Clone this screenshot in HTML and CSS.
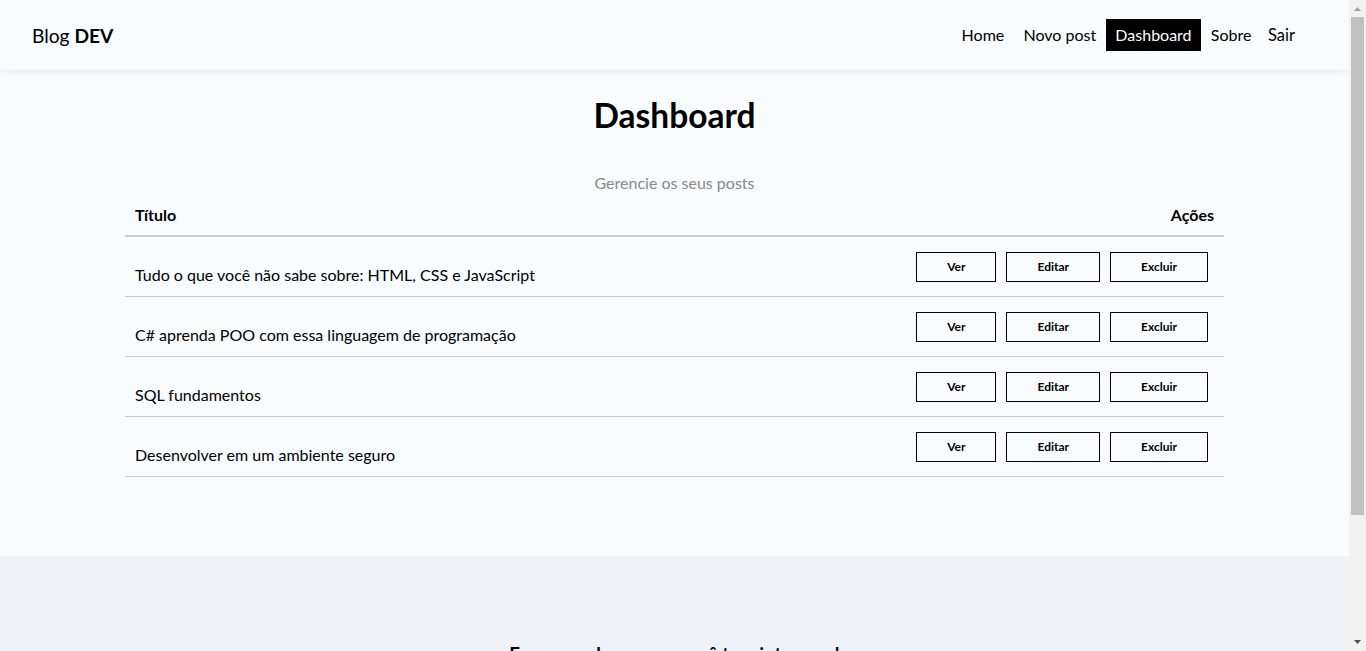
FILE: index.html
```html
<!DOCTYPE html>
<html lang="pt-BR">
<head>
<meta charset="utf-8">
<title>Blog DEV</title>
<link rel="stylesheet" href="styles.css">
</head>
<body>
<nav class="navbar">
  <a class="brand" href="#">Blog <span>DEV</span></a>
  <ul class="links">
    <li><a href="#">Home</a></li>
    <li><a href="#">Novo post</a></li>
    <li><a class="active" href="#">Dashboard</a></li>
    <li><a href="#">Sobre</a></li>
    <li><button class="logout">Sair</button></li>
  </ul>
</nav>
<main class="dashboard">
  <h1>Dashboard</h1>
  <p class="subtitle">Gerencie os seus posts</p>
  <div class="table">
    <div class="thead">
      <span>Título</span>
      <span>Ações</span>
    </div>
    <div class="row">
      <p class="title">Tudo o que você não sabe sobre: HTML, CSS e JavaScript</p>
      <div class="actions">
        <a class="btn" href="#">Ver</a>
        <a class="btn" href="#">Editar</a>
        <button class="btn">Excluir</button>
      </div>
    </div>
    <div class="row">
      <p class="title">C# aprenda POO com essa linguagem de programação</p>
      <div class="actions">
        <a class="btn" href="#">Ver</a>
        <a class="btn" href="#">Editar</a>
        <button class="btn">Excluir</button>
      </div>
    </div>
    <div class="row">
      <p class="title">SQL fundamentos</p>
      <div class="actions">
        <a class="btn" href="#">Ver</a>
        <a class="btn" href="#">Editar</a>
        <button class="btn">Excluir</button>
      </div>
    </div>
    <div class="row">
      <p class="title">Desenvolver em um ambiente seguro</p>
      <div class="actions">
        <a class="btn" href="#">Ver</a>
        <a class="btn" href="#">Editar</a>
        <button class="btn">Excluir</button>
      </div>
    </div>
  </div>
</main>
<footer class="footer">
  <h3>Escreva sobre o que você tem interesse!</h3>
  <p>Blog DEV &copy; 2022</p>
</footer>
<div class="scrollbar" aria-hidden="true">
  <div class="sb-btn">
    <svg width="17" height="17" viewBox="0 0 17 17"><path d="M5 11 L8.5 7 L12 11 Z" fill="#a3a3a3"/></svg>
  </div>
  <div class="sb-track"><div class="sb-thumb"></div></div>
  <div class="sb-btn">
    <svg width="17" height="17" viewBox="0 0 17 17"><path d="M5 6 L8.5 10 L12 6 Z" fill="#505050"/></svg>
  </div>
</div>
</body>
</html>
```
FILE: styles.css
```css
* {
  box-sizing: border-box;
}

html {
  scrollbar-width: none;
}

body {
  margin: 0 17px 0 0;
  background: #f8fcff;
  color: #000;
  font-family: Lato, "Noto Sans", sans-serif;
  font-size: 16px;
}

a {
  color: #000;
  text-decoration: none;
}

.navbar {
  height: 70px;
  display: flex;
  align-items: center;
  justify-content: space-between;
  padding: 0 47px 0 32px;
  background: #f8fcff;
  box-shadow: 0 -2px 10px rgba(0, 0, 0, 0.15);
  position: relative;
}

.brand {
  font-size: 19.2px;
  margin-top: 1px;
}

.brand span {
  font-weight: 700;
}

.links {
  display: flex;
  align-items: center;
  list-style: none;
  margin: 0;
  padding: 0;
}

.links a {
  display: block;
  padding: 0.4em 0.6em;
  line-height: 20px;
}

.links a.active {
  background: #000;
  color: #fff;
}

.logout {
  background: transparent;
  border: none;
  font-family: inherit;
  font-size: 16.5px;
  padding: 0 7px 1px;
  cursor: pointer;
  color: #000;
}

.dashboard {
  min-height: 486px;
  padding-top: 25px;
}

.dashboard h1 {
  margin: 0;
  text-align: center;
  font-size: 33.5px;
  line-height: 40px;
  font-weight: 700;
}

.subtitle {
  margin: 38px 0 0;
  text-align: center;
  color: #888;
  line-height: 20px;
}

.table {
  width: 1099px;
  margin: 0 auto;
}

.thead {
  display: flex;
  justify-content: space-between;
  padding: 11px 10px 9px;
  font-weight: 700;
  line-height: 22px;
  border-bottom: 2px solid #ccc;
}

.row {
  display: flex;
  align-items: center;
  justify-content: space-between;
  height: 60px;
  padding: 0 16px 0 10px;
  border-bottom: 1px solid #ccc;
}

.title {
  margin: 16px 0 0;
  line-height: 20px;
}

.actions {
  display: flex;
  gap: 10px;
}

.btn {
  display: block;
  height: 30px;
  padding: 0 30px;
  border: 1px solid #000;
  background: transparent;
  font-family: inherit;
  font-size: 12px;
  font-weight: 700;
  line-height: 28px;
  color: #000;
  cursor: pointer;
}

.footer {
  height: 251px;
  background: #eef2f6;
  padding-top: 86px;
  text-align: center;
}

.footer h3 {
  margin: 0;
  font-size: 18.72px;
  line-height: 24px;
}

.footer p {
  margin: 16px 0 0;
}

.scrollbar {
  position: fixed;
  top: 0;
  right: 0;
  width: 17px;
  height: 100vh;
  background: #f1f1f1;
  display: flex;
  flex-direction: column;
}

.sb-btn {
  height: 17px;
  flex: none;
}

.sb-btn svg {
  display: block;
}

.sb-track {
  flex: 1;
  padding: 0 2px;
}

.sb-thumb {
  height: 498px;
  background: #c1c1c1;
}
```
